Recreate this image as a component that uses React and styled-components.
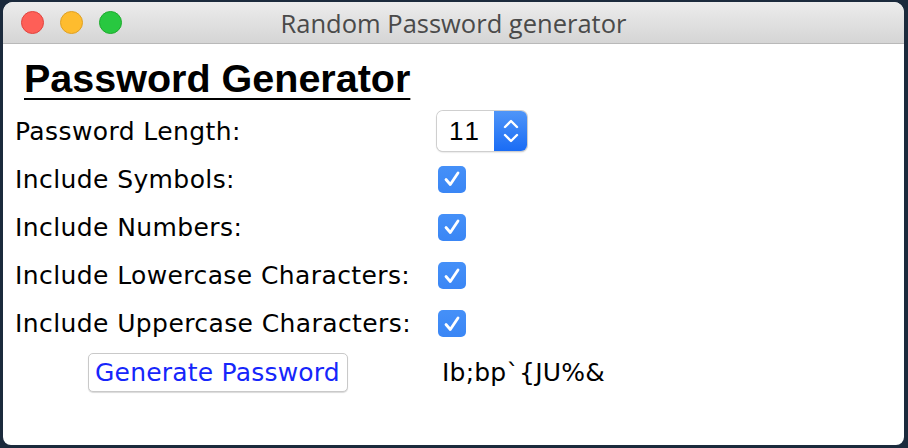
import React from "react";
import styled, { createGlobalStyle } from "styled-components";

const Global = createGlobalStyle`
  html, body { margin: 0; padding: 0; background: #1b2a3c; }
  body { width: 908px; height: 448px; overflow: hidden; }
`;

const Screen = styled.div`
  width: 908px;
  height: 448px;
  padding: 2px 4px 3px 3px;
  box-sizing: border-box;
  display: flex;
`;

const Window = styled.div`
  flex: 1;
  background: #fff;
  border-radius: 10px 10px 8px 8px;
  overflow: hidden;
  display: flex;
  flex-direction: column;
  font-family: "DejaVu Sans", "Liberation Sans", sans-serif;
`;

const TitleBar = styled.div`
  height: 41px;
  flex: none;
  background: linear-gradient(#ececec, #d5d5d5);
  border-bottom: 1px solid #b9b9b9;
  position: relative;
  display: flex;
  align-items: center;
  justify-content: center;
`;

const Lights = styled.div`
  position: absolute;
  left: 18px;
  top: 9px;
  display: flex;
  gap: 16px;
`;

const Light = styled.span`
  width: 23px;
  height: 23px;
  border-radius: 50%;
  box-sizing: border-box;
  background: ${(p) => p.$c};
  border: 1px solid ${(p) => p.$b};
`;

const Title = styled.div`
  font-family: "Open Sans", "Liberation Sans", sans-serif;
  font-size: 25.5px;
  color: #4a4a4a;
  margin-top: 1px;
`;

const Content = styled.div`
  padding: 10px 0 0 12px;
  display: flex;
  flex-direction: column;
`;

const Heading = styled.h1`
  margin: 0 0 0 9px;
  font-family: "Liberation Sans", Arial, sans-serif;
  font-size: 39.5px;
  font-weight: bold;
  text-decoration: underline;
  text-decoration-thickness: 2px;
  text-underline-offset: 6px;
  color: #000;
  line-height: 48px;
`;

const Form = styled.div`
  display: grid;
  grid-template-columns: 422px 1fr;
  grid-auto-rows: 48.2px;
  margin-top: 5px;
`;

const Label = styled.div`
  display: flex;
  align-items: center;
  font-size: 25px;
  letter-spacing: 0.4px;
  color: #000;
`;

const Cell = styled.div`
  display: flex;
  align-items: center;
  justify-content: ${(p) => (p.$center ? "center" : "flex-start")};
`;

const Spinner = styled.div`
  display: flex;
  height: 40px;
  width: 90px;
  border-radius: 6px;
  box-shadow: 0 0 0 1px #cfcfcf, 0 1px 2px rgba(0, 0, 0, 0.25);
  overflow: hidden;
`;

const SpinValue = styled.div`
  flex: 1;
  display: flex;
  align-items: center;
  justify-content: center;
  font-family: "Liberation Sans", Arial, sans-serif;
  font-size: 26px;
  letter-spacing: 3px;
  background: #fff;
`;

const SpinArrows = styled.div`
  width: 33px;
  background: linear-gradient(#4f95f8, #1a6cf5);
  display: flex;
  align-items: center;
  justify-content: center;
`;

const Check = styled.div`
  width: 28px;
  height: 27px;
  border-radius: 5px;
  background: linear-gradient(#4590f8, #3a86f5);
  display: flex;
  align-items: center;
  justify-content: center;
  margin-left: 1px;
`;

const Button = styled.button`
  font-family: "DejaVu Sans", "Liberation Sans", sans-serif;
  font-size: 25px;
  letter-spacing: 0.2px;
  color: #1626fb;
  background: #fff;
  border: 1px solid #c9c9c9;
  border-radius: 5px;
  box-shadow: 0 1px 1px rgba(0, 0, 0, 0.15);
  width: 260px;
  height: 39px;
  padding: 0;
  margin-right: 17px;
`;

const Output = styled.div`
  font-size: 25px;
  letter-spacing: 0.2px;
  margin-left: 5px;
  color: #000;
`;

const CheckMark = () => (
  <svg width="20" height="20" viewBox="0 0 20 20">
    <path d="M4 10.5 L8.3 15.5 L16 4" fill="none" stroke="#fff" strokeWidth="2.8" strokeLinecap="round" strokeLinejoin="round" />
  </svg>
);

const Arrows = () => (
  <svg width="20" height="30" viewBox="0 0 20 30">
    <path d="M4 11 L10 5 L16 11" fill="none" stroke="#fff" strokeWidth="2.4" strokeLinecap="round" strokeLinejoin="round" />
    <path d="M4 19 L10 25 L16 19" fill="none" stroke="#fff" strokeWidth="2.4" strokeLinecap="round" strokeLinejoin="round" />
  </svg>
);

const options = [
  "Include Symbols:",
  "Include Numbers:",
  "Include Lowercase Characters:",
  "Include Uppercase Characters:",
];

export default function App() {
  return (
    <>
      <Global />
      <Screen>
        <Window>
          <TitleBar>
            <Lights>
              <Light $c="#fe5f57" $b="#e1443e" />
              <Light $c="#febc2e" $b="#dfa023" />
              <Light $c="#28c840" $b="#1eab2d" />
            </Lights>
            <Title>Random Password generator</Title>
          </TitleBar>
          <Content>
            <Heading>Password Generator</Heading>
            <Form>
              <Label>Password Length:</Label>
              <Cell>
                <Spinner>
                  <SpinValue>11</SpinValue>
                  <SpinArrows>
                    <Arrows />
                  </SpinArrows>
                </Spinner>
              </Cell>
              {options.map((o) => (
                <React.Fragment key={o}>
                  <Label>{o}</Label>
                  <Cell>
                    <Check>
                      <CheckMark />
                    </Check>
                  </Cell>
                </React.Fragment>
              ))}
              <Cell $center>
                <Button>Generate Password</Button>
              </Cell>
              <Cell>
                <Output>Ib;bp`&#123;JU%&amp;</Output>
              </Cell>
            </Form>
          </Content>
        </Window>
      </Screen>
    </>
  );
}
